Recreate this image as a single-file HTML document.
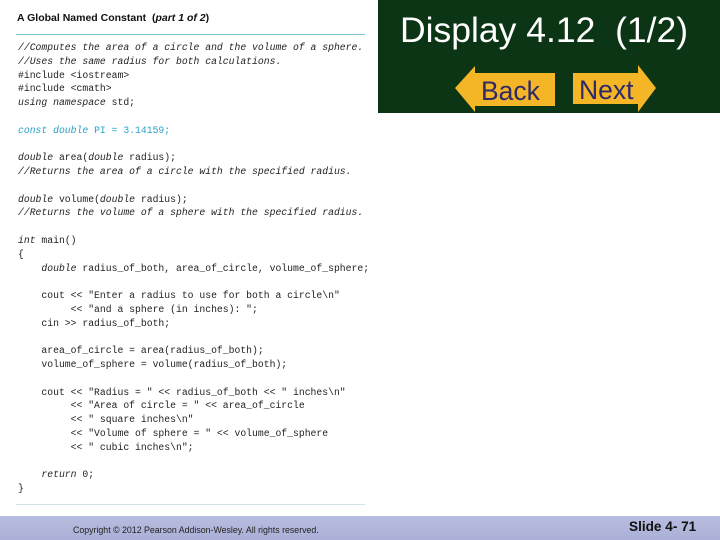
<!DOCTYPE html>
<html><head><meta charset="utf-8"><style>
body{margin:0;width:720px;height:540px;position:relative;background:#fff;overflow:hidden;font-family:"Liberation Sans",sans-serif}
.green{position:absolute;left:378px;top:0;width:342px;height:113px;background:#0b3514}
.title{position:absolute;left:400px;top:9px;color:#fff;font-size:35.5px;white-space:pre;line-height:42px}
.h{position:absolute;left:17px;top:12px;font-size:10.5px;font-weight:bold;color:#111}
.rule{position:absolute;left:16px;width:349px;height:1px;background:#7fc3c8}
pre{position:absolute;left:18px;top:41px;margin:0;font-family:"Liberation Mono",monospace;font-size:9.75px;line-height:13.78px;color:#222}
pre i{font-style:italic}
.c{color:#2aa0c8}
.foot{position:absolute;left:0;top:516px;width:720px;height:24px;background:linear-gradient(#b8bce0,#aab0d6)}
.copy{position:absolute;left:73px;top:525px;font-size:8.8px;color:#222}
.slide{position:absolute;left:629px;top:519px;font-size:13.6px;font-weight:bold;color:#111}
</style></head><body>
<div class="h">A Global Named Constant &nbsp;(<i>part 1 of 2</i>)</div>
<div class="rule" style="top:34px"></div>
<pre><i>//Computes the area of a circle and the volume of a sphere.
//Uses the same radius for both calculations.</i>
#include &lt;iostream&gt;
#include &lt;cmath&gt;
<i>using namespace</i> std;

<span class="c"><i>const double</i> PI = 3.14159;</span>

<i>double</i> area(<i>double</i> radius);
<i>//Returns the area of a circle with the specified radius.</i>

<i>double</i> volume(<i>double</i> radius);
<i>//Returns the volume of a sphere with the specified radius.</i>

<i>int</i> main()
{
    <i>double</i> radius_of_both, area_of_circle, volume_of_sphere;

    cout &lt;&lt; "Enter a radius to use for both a circle\n"
         &lt;&lt; "and a sphere (in inches): ";
    cin &gt;&gt; radius_of_both;

    area_of_circle = area(radius_of_both);
    volume_of_sphere = volume(radius_of_both);

    cout &lt;&lt; "Radius = " &lt;&lt; radius_of_both &lt;&lt; " inches\n"
         &lt;&lt; "Area of circle = " &lt;&lt; area_of_circle
         &lt;&lt; " square inches\n"
         &lt;&lt; "Volume of sphere = " &lt;&lt; volume_of_sphere
         &lt;&lt; " cubic inches\n";

    <i>return</i> 0;
}</pre>
<div class="rule" style="top:504px;background:#cfe6e8"></div>
<div class="green"></div>
<div class="title">Display 4.12  (1/2)</div>
<svg style="position:absolute;left:0;top:0" width="720" height="120">
<polygon points="455,88 475,66 475,73 555,73 555,106 475,106 475,112" fill="#f4b526"/>
<polygon points="656,88 638,65 638,73 573,73 573,104 638,104 638,112" fill="#f4b526"/>
<text x="481" y="100" font-family="Liberation Sans" font-size="26.5" fill="#2e2a6a">Back</text>
<text x="579" y="99" font-family="Liberation Sans" font-size="26.5" fill="#2e2a6a">Next</text>
</svg>
<div class="foot"></div>
<div class="copy">Copyright © 2012 Pearson Addison-Wesley. All rights reserved.</div>
<div class="slide">Slide 4- 71</div>
</body></html>
